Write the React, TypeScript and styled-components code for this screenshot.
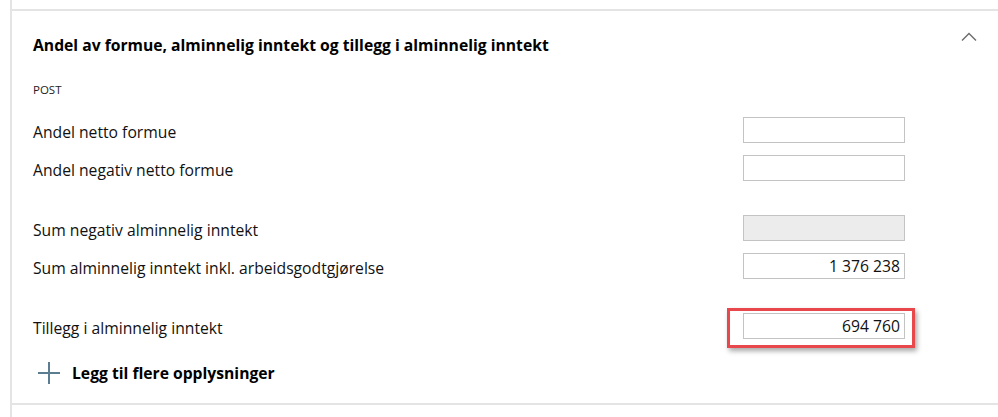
import React from "react";
import styled, { createGlobalStyle } from "styled-components";

const GlobalStyle = createGlobalStyle`
  html, body {
    margin: 0;
    padding: 0;
    background: #ffffff;
  }
  body {
    font-family: "Open Sans", "Noto Sans", sans-serif;
    color: #111111;
  }
`;

const Page = styled.div`
  margin-left: 10px;
  min-height: 417px;
  padding-top: 9px;
  border-left: 2px solid #e4e4e4;
  box-sizing: border-box;
`;

const Section = styled.section`
  border-top: 2px solid #e4e4e4;
  border-bottom: 2px solid #e4e4e4;
`;

const Header = styled.div`
  display: flex;
  justify-content: space-between;
  align-items: flex-start;
  padding: 21px 21px 0 21px;
`;

const Title = styled.h2`
  margin: 3px 0 0 0;
  font-size: 15.7px;
  line-height: 20px;
  font-weight: 700;
  color: #000000;
`;

const Body = styled.div`
  padding: 28px 93px 18px 21px;
`;

const ColumnLabel = styled.div`
  font-size: 11.5px;
  line-height: 14px;
  color: #222222;
  text-transform: uppercase;
  margin-bottom: 20px;
`;

const Group = styled.div`
  display: flex;
  flex-direction: column;
  gap: 12px;
  & + & {
    margin-top: 34px;
  }
`;

const Row = styled.div`
  display: flex;
  justify-content: space-between;
  align-items: center;
  height: 26px;
`;

const Label = styled.span`
  font-size: 15.7px;
  padding-top: 3px;
  color: #111111;
`;

const FieldWrap = styled.div`
  position: relative;
`;

const Field = styled.div<{ $disabled?: boolean }>`
  width: 162px;
  height: 26px;
  box-sizing: border-box;
  border: 1px solid #c3c3c3;
  background: ${(p) => (p.$disabled ? "#ececec" : "#ffffff")};
  font-size: 15.7px;
  line-height: 24px;
  text-align: right;
  padding-right: 4px;
  color: #111111;
`;

const Highlight = styled.div`
  position: absolute;
  top: -5px;
  left: -16px;
  width: 188px;
  height: 40px;
  box-sizing: border-box;
  border: 3px solid #e8474c;
  box-shadow: 2px 3px 5px rgba(0, 0, 0, 0.35);
  pointer-events: none;
`;

const AddButton = styled.button`
  display: flex;
  align-items: center;
  gap: 12px;
  margin: 22px 0 0 5px;
  padding: 0;
  border: none;
  background: none;
  font-family: inherit;
  font-size: 15.7px;
  font-weight: 700;
  color: #000000;
  cursor: pointer;
  height: 24px;
`;

const Chevron = () => (
  <svg width="16" height="10" viewBox="0 0 16 10" fill="none">
    <path d="M1 8.5 L8 1.5 L15 8.5" stroke="#6b6b6b" strokeWidth="1.4" />
  </svg>
);

const Plus = () => (
  <svg width="22" height="22" viewBox="0 0 22 22" fill="none">
    <path d="M11 0 V22 M0 11 H22" stroke="#5b7d92" strokeWidth="2" />
  </svg>
);

const groups = [
  [
    { label: "Andel netto formue", value: "" },
    { label: "Andel negativ netto formue", value: "" },
  ],
  [
    { label: "Sum negativ alminnelig inntekt", value: "", disabled: true },
    { label: "Sum alminnelig inntekt inkl. arbeidsgodtgjørelse", value: "1 376 238" },
  ],
  [{ label: "Tillegg i alminnelig inntekt", value: "694 760", marked: true }],
];

export default function App() {
  return (
    <>
      <GlobalStyle />
      <Page>
        <Section>
          <Header>
            <Title>Andel av formue, alminnelig inntekt og tillegg i alminnelig inntekt</Title>
            <Chevron />
          </Header>
          <Body>
            <ColumnLabel>Post</ColumnLabel>
            {groups.map((rows, i) => (
              <Group key={i}>
                {rows.map((r: any) => (
                  <Row key={r.label}>
                    <Label>{r.label}</Label>
                    <FieldWrap>
                      <Field $disabled={r.disabled}>{r.value}</Field>
                      {r.marked && <Highlight />}
                    </FieldWrap>
                  </Row>
                ))}
              </Group>
            ))}
            <AddButton>
              <Plus />
              Legg til flere opplysninger
            </AddButton>
          </Body>
        </Section>
      </Page>
    </>
  );
}
